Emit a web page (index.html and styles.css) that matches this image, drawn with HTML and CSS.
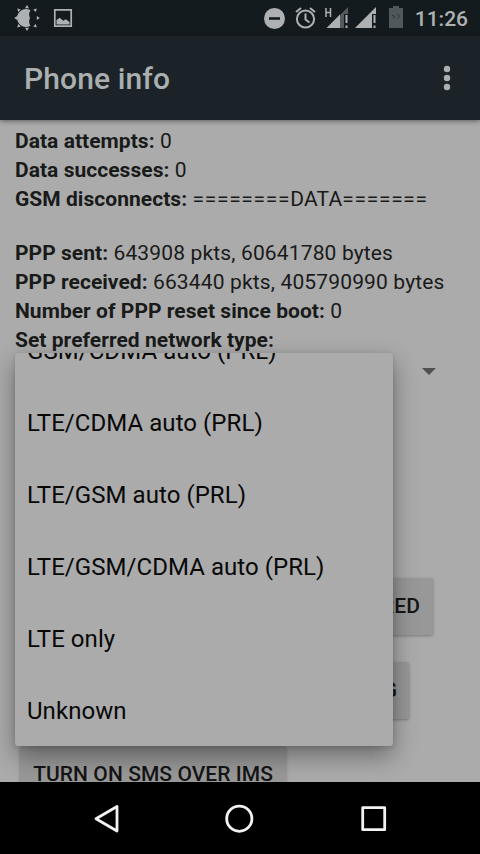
FILE: index.html
```html
<!DOCTYPE html>
<html lang="en">
<head>
<meta charset="utf-8">
<title>Phone info</title>
<link rel="stylesheet" href="styles.css">
</head>
<body>
<div class="phone">
  <header class="status">
    <svg class="status-icons" width="480" height="36" viewBox="0 0 480 36" fill="#aeb1b2">
      <path d="M30.5 10.2Q28 14 30 18Q28 22 30.5 25.8A9 9 0 1 1 30.5 10.2z"/>
      <path d="M27 5l2 3.2h-4zM17.2 8.5l3.6 1-2.6 2.6zM14.2 18l3-2v4zM17.2 27.5l1-3.6 2.6 2.6zM27 31l-2-3.2h4zM36.8 8.5l-1 3.6-2.6-2.6zM39.8 18l-3 2v-4zM36.8 27.5l-3.6-1 2.6-2.6z"/>
      <path d="M54.8 9.8h16.4v16.4H54.8z" fill="none" stroke="#aeb1b2" stroke-width="1.7"/>
      <path d="M56.5 24.5V20l3.2-2.2 3.5 3 2.6-1.6 3.7 2.8v2.5z"/>
      <circle cx="274.5" cy="18.5" r="10.5"/>
      <path d="M269 17.2h11v2.6h-11z" fill="#141b1f"/>
      <g fill="none" stroke="#aeb1b2" stroke-width="2">
        <circle cx="305.5" cy="19" r="8.6"/>
        <path d="M305.5 13.5v6l4 3M296 12l5-4M315 12l-5-4"/>
      </g>
      <path d="M326 8v9M330.5 8v9M326 12.5h5" stroke="#aeb1b2" stroke-width="1.5"/>
      <path d="M348 7v7h-4v14h-5V16z" fill="#555b5d"/>
      <path d="M326.5 28L340 14.5V28z"/>
      <path d="M345.5 15h2v8h-2zM345.5 25.5h2V28h-2z"/>
      <path d="M355 28l21-21v7h-4v14z"/>
      <path d="M373.5 15h2v8h-2zM373.5 25.5h2V28h-2z"/>
      <path d="M389 8h4V6h6v2h4v20h-14z" fill="#50585b"/>
      <path d="M391.5 15l3 1-1 3M397 14l3 2-3 3" fill="none" stroke="#30383b"/>
    </svg>
    <span class="clock">11:26</span>
  </header>
  <div class="toolbar">
    <h1>Phone info</h1>
    <svg width="8" height="26" viewBox="0 0 8 26" fill="#abafb0"><circle cx="4" cy="4" r="3.2"/><circle cx="4" cy="13" r="3.2"/><circle cx="4" cy="22" r="3.2"/></svg>
  </div>
  <main class="content">
    <div class="info">
      <p><b>Data attempts:</b> 0</p>
      <p><b>Data successes:</b> 0</p>
      <p class="gap-after"><b>GSM disconnects:</b> <span class="rule">========</span>DATA<span class="rule">=======</span></p>
      <p><b>PPP sent:</b> 643908 pkts, 60641780 bytes</p>
      <p><b>PPP received:</b> 663440 pkts, 405790990 bytes</p>
      <p><b>Number of PPP reset since boot:</b> 0</p>
      <p><b>Set preferred network type:</b></p>
    </div>
    <div class="spinner"><svg width="14" height="7" viewBox="0 0 14 7"><path d="M0 0h14L7 7z" fill="#505050"/></svg></div>
    <div class="buttons">
      <div class="btn required">TURN ON IMS REGISTRATION REQUIRED</div>
      <div class="btn flag">TURN ON VOLTE PROVISIONED FLAG</div>
      <div class="btn sms">TURN ON SMS OVER IMS</div>
    </div>
    <div class="menu">
      <div class="option">GSM/CDMA auto (PRL)</div>
      <div class="option">LTE/CDMA auto (PRL)</div>
      <div class="option">LTE/GSM auto (PRL)</div>
      <div class="option">LTE/GSM/CDMA auto (PRL)</div>
      <div class="option">LTE only</div>
      <div class="option">Unknown</div>
    </div>
  </main>
  <nav class="navbar">
    <svg width="480" height="72" viewBox="0 0 480 72" fill="none" stroke="#f2f2f2" stroke-width="2.8" stroke-linejoin="round">
      <path d="M117 24.5v24.5L96 36.7z"/>
      <circle cx="239.3" cy="36.7" r="12.6"/>
      <path d="M362.7 25.7h22v22h-22z"/>
    </svg>
  </nav>
</div>
</body>
</html>
```
FILE: styles.css
```css
* { box-sizing: border-box; }
body { margin: 0; font-family: Roboto, "Liberation Sans", sans-serif; }
.phone {
  width: 480px;
  height: 854px;
  display: flex;
  flex-direction: column;
  overflow: hidden;
  background: #ababab;
}
.status {
  position: relative;
  height: 36px;
  flex: none;
  display: flex;
  align-items: center;
  justify-content: flex-end;
  padding: 2px 12px 0 0;
  background: #141b1f;
}
.status-icons { position: absolute; left: 0; top: 0; }
.clock { color: #aeb1b2; font-size: 21px; font-weight: 500; line-height: 24px; }
.toolbar {
  position: relative;
  z-index: 1;
  height: 84px;
  flex: none;
  display: flex;
  align-items: center;
  justify-content: space-between;
  padding: 0 29px 0 24px;
  background: #1b2328;
  box-shadow: 0 1px 5px rgba(0, 0, 0, .45);
}
h1 { margin: 0; padding-top: 2px; color: #abafb0; font-size: 30px; font-weight: 500; line-height: 36px; letter-spacing: .1px; }
.content {
  position: relative;
  flex: 1;
  min-height: 0;
  overflow: hidden;
  padding-top: 7px;
}
.info { padding-left: 15px; font-size: 21px; color: #191a1a; letter-spacing: .15px; }
.info b { letter-spacing: .04px; }
.info .rule { letter-spacing: .7px; }
.info p { margin: 0; height: 29px; line-height: 29px; white-space: nowrap; }
.info .gap-after { margin-bottom: 25px; }
.spinner { display: flex; justify-content: flex-end; padding: 13px 44px 0 0; height: 103px; }
.spinner svg { display: block; }
.buttons { display: flex; flex-direction: column; gap: 27px; padding: 120px 0 0 20px; }
.btn {
  height: 57px;
  display: flex;
  align-items: center;
  justify-content: flex-end;
  padding: 0 13px 2px 0;
  border-radius: 3px;
  background: #989898;
  box-shadow: 0 1px 3px rgba(0, 0, 0, .3);
  color: #151515;
  font-size: 21px;
  font-weight: 500;
  letter-spacing: .06px;
  white-space: nowrap;
  overflow: hidden;
}
.required { width: 413px; }
.flag { width: 389px; padding-right: 12px; }
.sms { width: 266px; }
.menu {
  position: absolute;
  left: 15px;
  top: 233px;
  width: 378px;
  height: 393px;
  display: flex;
  flex-direction: column;
  justify-content: flex-end;
  overflow: hidden;
  border-radius: 3px;
  background: #ababab;
  box-shadow: 0 10px 24px rgba(0, 0, 0, .38), 0 1px 5px rgba(0, 0, 0, .15);
}
.option {
  flex: none;
  height: 72px;
  padding-left: 12px;
  line-height: 74px;
  font-size: 24px;
  letter-spacing: .06px;
  color: #080808;
  white-space: nowrap;
}
.navbar { height: 72px; flex: none; background: #000; }
.navbar svg { display: block; }
```
